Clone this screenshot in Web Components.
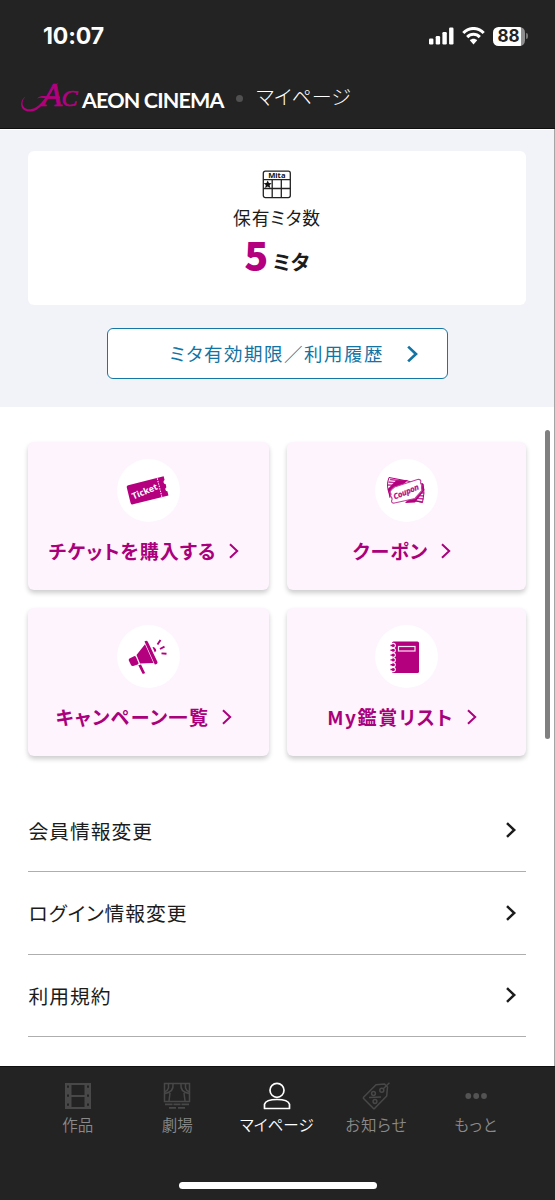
<!DOCTYPE html>
<html lang="ja">
<head>
<meta charset="utf-8">
<title>AEON CINEMA マイページ</title>
<style>
body{margin:0;background:#fff;font-family:"Noto Sans CJK JP","Noto Sans",sans-serif;color:#1c1c1c;overflow:hidden}
</style>
</head>
<body>
<my-page></my-page>
<script>
const define=(name,html)=>customElements.define(name,class extends HTMLElement{
  constructor(){
    super();
    const t=document.createElement('template');
    t.innerHTML=html;
    this.attachShadow({mode:'open'}).append(t.content.cloneNode(true));
  }
});

define('chevron-icon',`<style>:host{display:block;width:12px;height:18px;flex:none}svg{display:block;width:100%;height:100%}</style>
<svg viewBox="0 0 12 18"><path d="M2 2.200 9.200 9 2 15.800" fill="none" stroke="currentColor" style="stroke-width:var(--w,2.2)"/></svg>`);

define('status-bar',`<style>
:host{display:flex;justify-content:space-between;align-items:center;height:70px;box-sizing:border-box;padding:2px 27px 0 43px;color:#fff}
.time{font:700 23px/28px Inter,sans-serif;letter-spacing:-.1px}
.right{display:flex;align-items:center;gap:8px}
svg{display:block}
.bat{display:flex;align-items:center;gap:1px}
.lvl{width:32px;height:19px;border-radius:5.5px;background:linear-gradient(90deg,#fff 28px,#8e8e8e 28px);color:#232323;font:700 17px/19.5px Inter,sans-serif;text-align:center;text-indent:-1px}
.nub{width:2px;height:6px;border-radius:0 2px 2px 0;background:#777}
</style>
<div class="time">10:07</div>
<div class="right">
<svg width="25" height="18" viewBox="0 0 25 18" fill="#fff"><rect x="0" y="11.5" width="4.4" height="6" rx="1.2"/><rect x="6.7" y="9" width="4.4" height="8.5" rx="1.2"/><rect x="13.4" y="5" width="4.4" height="12.5" rx="1.2"/><rect x="20.1" y=".5" width="4.4" height="17" rx="1.2"/></svg>
<svg width="23" height="18" viewBox="0 0 23 18"><g fill="none" stroke="#fff" stroke-width="3"><path d="M1.3 6.1C7-.1 16-.1 21.7 6.1"/><path d="M5.2 10.1c3.6-3.7 9-3.7 12.6 0"/></g><path d="M7.8 13.3c2.2-2 5.2-2 7.4 0L11.5 17.4Z" fill="#fff"/></svg>
<div class="bat"><div class="lvl">88</div><div class="nub"></div></div>
</div>`);

define('cinema-logo',`<style>:host{display:flex;align-items:flex-start;color:#fff}svg{display:block;overflow:visible;margin-top:-1px}
.n{font:700 21.500px/30px Lato,sans-serif;letter-spacing:-.85px;margin:3px 0 0 4px;white-space:nowrap}</style>
<svg width="56" height="30" viewBox="0 0 56 30" fill="#b4007f">
<g stroke="#b4007f" stroke-width=".7" font-family="Liberation Serif" font-style="italic"><text x="20" y="24.800" font-size="33">A</text>
<text x="39.400" y="24.800" font-size="24">C</text></g>
<path d="M4 15.5C-1 18.5-1.4 29 8.5 28.2 20 27.5 26 9 36.500 1.500 27 11 21 30.500 8 30.500-4 30.500-2 17.500 4 15.500Z"/>
<path d="M15 17.5c3-3 6-2.6 9-2.3l14 .6v1.4H24c-3-.2-6-.9-9 .3Z"/></svg>
<span class="n">AEON CINEMA</span>`);

define('app-header',`<style>
:host{display:flex;align-items:flex-start;height:59px;box-sizing:border-box;padding:12px 0 0 22px;color:#fff;border-bottom:1px solid #0e0e0e}
i{width:7px;height:7px;border-radius:50%;background:#505050;margin:13px 13px 0 12.5px}
.t{font-size:20px;font-weight:300;line-height:29px;letter-spacing:0;font-feature-settings:"palt"}
</style><cinema-logo></cinema-logo><i></i><div class="t"><slot></slot></div>`);

define('stamp-icon',`<style>:host{display:block}svg{display:block}</style>
<svg width="30" height="29" viewBox="0 0 30 29"><g fill="none" stroke="#222" stroke-width="1.3"><rect x="1.3" y="1.2" width="27" height="26.4" rx="2"/><path d="M1 9.7h27.5M1 18.5h27.5M10.2 9.7v18M19.3 9.7v18"/></g><text x="14.8" y="8.200" text-anchor="middle" font-family="Noto Sans" font-weight="700" font-size="7.6" fill="#111">Mita</text><path d="m5.7 10.400 1.200 2.500 2.900.3-2.200 1.900.7 2.800-2.600-1.500-2.600 1.500.7-2.800-2.200-1.900 2.900-.3Z" fill="#111"/></svg>`);

define('mita-summary',`<style>
:host{display:flex;flex-direction:column;align-items:center;height:278px;box-sizing:border-box;padding:21px 29px 0 28px;background:#f2f3f8;border-top:1px solid #fff}
.card{align-self:stretch;height:154px;box-sizing:border-box;padding-top:19px;background:#fff;border-radius:6px;display:flex;flex-direction:column;align-items:center;font-feature-settings:"palt"}
.l{font-size:17.800px;line-height:24px;letter-spacing:.9px;margin-top:6px}
.n{display:flex;align-items:baseline;font-weight:700;height:50px;line-height:50px;margin-top:0}
.n b{font-size:39.500px;color:#b4007f}.n span{font-size:20.500px;letter-spacing:.2px;margin-left:4px;position:relative;top:-1px}
.btn{width:341px;height:51px;box-sizing:border-box;border:1.5px solid #1577a5;border-radius:6px;background:#fff;color:#1374a3;margin-top:23px;display:flex;align-items:center;padding:0 0 1px 62px;font-size:18.500px;letter-spacing:1.5px;font-feature-settings:"palt"}
.btn span{width:236px;white-space:nowrap}
chevron-icon{--w:2.500;width:13px;height:20px;margin-top:1px}
</style>
<div class="card"><stamp-icon></stamp-icon><div class="l">保有ミタ数</div><div class="n"><b>5</b><span>ミタ</span></div></div>
<div class="btn"><span>ミタ有効期限／利用履歴</span><chevron-icon></chevron-icon></div>`);

define('menu-card',`<style>
:host{display:flex;flex-direction:column;align-items:center;height:148px;box-sizing:border-box;padding-top:17px;background:#fdf4fd;border-radius:6px;box-shadow:0 3px 5px rgba(0,0,0,.2);color:#aa007c}
.c{width:63px;height:63px;border-radius:50%;background:#fff;display:grid;place-items:center}
.t{display:flex;align-items:center;gap:12px;margin-top:15px;padding-right:7.500px;line-height:28px;font-size:19px;font-weight:700;letter-spacing:var(--ls,1px);font-feature-settings:"palt";white-space:nowrap}
chevron-icon{--w:2}
</style><div class="c"><slot name="icon"></slot></div><div class="t"><slot></slot><chevron-icon></chevron-icon></div>`);

define('ticket-icon',`<style>:host{display:block}svg{display:block}</style>
<svg width="44" height="44" viewBox="0 0 44 44"><g transform="rotate(-14 22 22)"><path d="M4 12.500h36.500v3.800a2.200 2.200 0 0 0 0 4.2v3.300a2.200 2.200 0 0 0 0 4.2v4.300H4q-2 0-2-2V14.500q0-2 2-2Z" fill="#b4007f"/><path d="M33.800 13v19" stroke="#fff" stroke-width="1" stroke-dasharray="1.5 1"/><text x="18.500" y="26" text-anchor="middle" fill="#fff" font-family="Noto Sans" font-weight="700" font-size="8.800" transform="rotate(-9 17 23)">Ticket</text></g></svg>`);

define('coupon-icon',`<style>:host{display:block}svg{display:block}</style>
<svg width="44" height="44" viewBox="0 0 44 44"><path d="M5 9.500 39 16q2.200 9-.5 18.500L6 27Q1.500 18 5 9.500Z" fill="#fff" stroke="#b4007f"/><path d="M6 11.500l16 2M4.500 14l14 1.500M4 17l12 .5M30 32.500l8.500 1.500M31 30l8.500 1M33 27.500l7 .5M34 25l6 0" stroke="#b4007f" stroke-width="1.300" opacity=".8"/><path d="M3.800 21 12 12.500l12-.5L5.500 30ZM21 35 39 15l1.500 7L31 34.500Z" fill="#b4007f"/><path d="M10.500 19 33.500 11.500q2.800-.6 3.300 1.500-1 2.500 1 4.500-.8 3 .2 5L31 30.500 10.500 35q-2.800.4-3-2 1.500-2.500-1-5 1-2.500-.6-4Q7.500 21 10.500 19Z" fill="#fff" stroke="#c2409c" stroke-width="1.200"/><text x="22" y="26.500" text-anchor="middle" fill="#b4007f" stroke="#b4007f" stroke-width=".3" font-family="Noto Sans" font-style="italic" font-weight="600" font-size="7.600" transform="rotate(-23 22 23.500)">Coupon</text></svg>`);

define('megaphone-icon',`<style>:host{display:block}svg{display:block}</style>
<svg width="44" height="44" viewBox="0 0 44 44" fill="#b4007f"><path d="m3.500 23.500 5-2.500q1 0 1.500 1l2.500 6q.3 1-.8 1.400l-4.500 1.500q-1.500.3-2.200-1L2.800 25.500q-.3-1.500.7-2ZM10.500 20 19 9.300 27.500 28l-13.500.5ZM18.500 6.400q2-1.500 3.200.2L31.500 27q.3 2.200-2.700 2.500ZM26.500 12q3.500.3 3.700 4l-1.500 1.200ZM12.300 30.200l2.700-.7 4 8.200q-.3 1.600-2.500 1Z"/><path d="m31.500 9.500 3-4.500M34 14l4.500-2.300M35.500 18.400l5 .4" fill="none" stroke="#b4007f" stroke-width="1.900"/></svg>`);

define('notebook-icon',`<style>:host{display:block}svg{display:block}</style>
<svg width="44" height="44" viewBox="0 0 44 44"><rect x="8" y="6.500" width="27" height="31.500" rx="1.500" fill="#b4007f"/><rect x="14.500" y="11.500" width="16.500" height="4.500" fill="none" stroke="#f9e5f4" stroke-width="1.200"/><g fill="#b4007f" stroke="#fff" stroke-width="1.100"><circle cx="9.200" cy="10.500" r="2.100"/><circle cx="9.200" cy="15.300" r="2.100"/><circle cx="9.200" cy="20.100" r="2.100"/><circle cx="9.200" cy="24.900" r="2.100"/><circle cx="9.200" cy="29.700" r="2.100"/><circle cx="9.200" cy="34.500" r="2.100"/></g><path d="M6.500 10.500h4M6.500 15.300h4M6.500 20.100h4M6.500 24.900h4M6.500 29.700h4M6.500 34.500h4" stroke="#b4007f" stroke-width="1.400"/></svg>`);

define('link-row',`<style>
:host{display:flex;align-items:center;justify-content:space-between;height:82.5px;box-sizing:border-box;border-bottom:1px solid #aeaeae;padding:0 9px 0 .5px;font-size:19.800px;letter-spacing:.95px;font-feature-settings:"palt"}
chevron-icon{--w:2.5}
</style><span><slot></slot></span><chevron-icon></chevron-icon>`);

define('tab-item',`<style>
:host{display:flex;flex-direction:column;align-items:center;color:#8a8a8a;font-size:15.500px;font-weight:350;letter-spacing:.1px}
:host([active]){color:#fff}
svg,::slotted(svg){display:block}
.l{line-height:22px;margin-top:3px;white-space:nowrap;font-feature-settings:"palt"}
</style><slot name="icon"></slot><div class="l"><slot></slot></div>`);

define('tab-bar',`<style>
:host{display:flex;flex-direction:column;align-items:center;height:134px;box-sizing:border-box;background:#232323;border-top:1px solid #111}
nav{display:grid;grid-template-columns:repeat(5,99.5px);padding-top:15px;margin-right:1.500px;width:497.500px;height:114.500px;box-sizing:border-box}
.home{width:198px;height:7px;border-radius:4px;background:#fff}
svg{display:block}
.wide{letter-spacing:.9px}
</style>
<nav>
<tab-item><svg slot="icon" width="28" height="28" viewBox="0 0 28 28"><path fill="#484848" fill-rule="evenodd" d="M1 1h26v26H1ZM7.500 3v10h13V3ZM7.500 15v10h13V15ZM3 3.500v2.200h2V3.500ZM3 12.500v2.200h2v-2.200ZM3 21.500v2.200h2v-2.200ZM23 3.500v2.200h2V3.500ZM23 12.500v2.200h2v-2.200ZM23 21.500v2.200h2v-2.200Z"/></svg>作品</tab-item>
<tab-item><svg slot="icon" width="28" height="28" viewBox="0 0 28 28" fill="none" stroke="#484848" stroke-width="1.500"><rect x="1.500" y="1.500" width="25" height="18"/><path d="M5.500 2v4q-1 3-4 4M10 2q1 8-8 9.500M7 11l-1 8M22.500 2v4q1 3 4 4M18 2q-1 8 8 9.500M21 11l1 8"/><path d="M2 22.300h7.500M10.500 22.300h7M18.500 22.300H26M6 25.800h7M15 25.800h7" stroke-width="1.700"/></svg>劇場</tab-item>
<tab-item active><svg slot="icon" width="28" height="28" viewBox="0 0 28 28" fill="none" stroke="#fff" stroke-width="1.700"><circle cx="14" cy="8.300" r="7"/><path d="M1.500 26.500v-4.300Q3 17.500 14 17.500t12.500 4.700v4.300Z" stroke-linejoin="round"/></svg>マイページ</tab-item>
<tab-item class="wide"><svg slot="icon" width="28" height="28" viewBox="0 0 28 28" fill="none" stroke="#484848" stroke-width="1.500" stroke-linejoin="round"><path d="M1.800 15 14 2.800 22.500 2l3 3-.8 9-12.200 12.500Q12 27 11.500 26.500L1.800 16.700Q1 16 1.800 15Z"/><circle cx="19.800" cy="8.200" r="2"/><path d="M21 7 27.500.8M7 15.500l12-.5"/><circle cx="11.500" cy="11.500" r="1.900"/><circle cx="13" cy="19.500" r="1.900"/></svg>お知らせ</tab-item>
<tab-item class="wide"><svg slot="icon" width="28" height="28" viewBox="0 0 28 28" fill="#535353"><circle cx="6.300" cy="14" r="2.900"/><circle cx="14.200" cy="14" r="2.900"/><circle cx="22" cy="14" r="2.900"/></svg>もっと</tab-item>
</nav><div class="home"></div>`);

define('my-page',`<style>
:host{display:flex;flex-direction:column;width:555px;height:1200px;position:relative;overflow:hidden}
.top{background:#232323}
.grid{display:grid;grid-template-columns:240.500px 239.500px;gap:18px;padding:34.500px 28px 0;row-gap:18.500px}
.list{margin:33.500px 29px 0 28px;flex:1}
.thumb{position:absolute;right:5px;top:430px;width:5px;height:309px;border-radius:3px;background:#808080}
.edge{position:absolute;right:0;top:129px;width:1px;height:937px;background:#a5a5a5}
.b{--ls:1.1px}.c{--ls:1.400px}.d{--ls:1.600px}
</style>
<div class="top"><status-bar></status-bar><app-header>マイページ</app-header></div>
<mita-summary></mita-summary>
<div class="grid">
<menu-card><ticket-icon slot="icon"></ticket-icon>チケットを購入する</menu-card>
<menu-card class="b"><coupon-icon slot="icon"></coupon-icon>クーポン</menu-card>
<menu-card class="c"><megaphone-icon slot="icon"></megaphone-icon>キャンペーン一覧</menu-card>
<menu-card class="d"><notebook-icon slot="icon"></notebook-icon>My鑑賞リスト</menu-card>
</div>
<div class="list"><link-row>会員情報変更</link-row><link-row>ログイン情報変更</link-row><link-row>利用規約</link-row></div>
<tab-bar></tab-bar>
<div class="thumb"></div><div class="edge"></div>`);
</script>
</body>
</html>
